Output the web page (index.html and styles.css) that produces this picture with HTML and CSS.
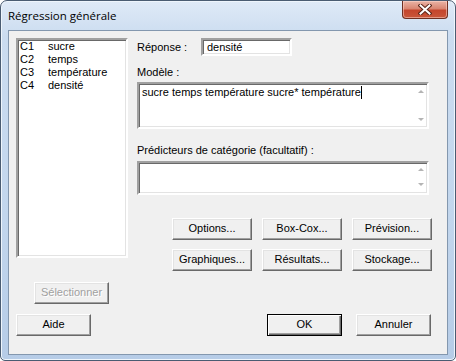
FILE: index.html
```html
<!DOCTYPE html>
<html lang="fr">
<head>
  <meta charset="UTF-8">
  <title>Régression générale</title>
  <link rel="stylesheet" href="styles.css">
</head>
<body>
  <div class="window">
    <div class="titlebar">
      <span class="title">Régression générale</span>
      <div class="close-btn">
        <svg width="14" height="11" viewBox="0 0 14 11">
          <path d="M2.5 1.5 L11.5 9.5 M11.5 1.5 L2.5 9.5" stroke="#5a2418" stroke-width="4" stroke-linecap="square" fill="none"/>
          <path d="M2.5 1.5 L11.5 9.5 M11.5 1.5 L2.5 9.5" stroke="#ffffff" stroke-width="2" stroke-linecap="square" fill="none"/>
        </svg>
      </div>
    </div>

    <div class="client">
      <div class="top">
        <div class="varlist sunken">
          <div class="var"><span class="col">C1</span><span>sucre</span></div>
          <div class="var"><span class="col">C2</span><span>temps</span></div>
          <div class="var"><span class="col">C3</span><span>température</span></div>
          <div class="var"><span class="col">C4</span><span>densité</span></div>
        </div>

        <div class="right">
          <div class="resp-row">
            <span class="resp-label">Réponse :</span>
            <div class="field sunken">densité</div>
          </div>

          <div class="label modele-label">Modèle :</div>
          <div class="memo memo-model sunken">
            <div class="memo-text">sucre temps température sucre* température<span class="caret"></span></div>
            <div class="scroll">
              <span class="arrow-up"></span>
              <span class="arrow-down"></span>
            </div>
          </div>

          <div class="label pred-label">Prédicteurs de catégorie (facultatif) :</div>
          <div class="memo memo-pred sunken">
            <div class="memo-text"></div>
            <div class="scroll">
              <span class="arrow-up"></span>
              <span class="arrow-down"></span>
            </div>
          </div>

          <div class="btn-grid">
            <div class="btn wide">Options...</div>
            <div class="btn wide">Box-Cox...</div>
            <div class="btn wide">Prévision...</div>
            <div class="btn wide">Graphiques...</div>
            <div class="btn wide">Résultats...</div>
            <div class="btn wide">Stockage...</div>
          </div>
        </div>
      </div>

      <div class="select-row">
        <div class="btn disabled">Sélectionner</div>
      </div>

      <div class="bottom-row">
        <div class="btn">Aide</div>
        <div class="btn default ok">OK</div>
        <div class="btn cancel">Annuler</div>
      </div>
    </div>
  </div>
</body>
</html>
```

FILE: styles.css
```css
body {
  margin: 0;
  background: #ffffff;
  font-family: "Liberation Sans", Arial, sans-serif;
  font-size: 11px;
  color: #000;
}

.window {
  width: 456px;
  height: 361px;
  box-sizing: border-box;
  border: 1px solid #4a5c72;
  border-radius: 7px 7px 5px 5px;
  background: linear-gradient(180deg, #dfeaf7 0%, #cbdcf0 10%, #c2d6ed 60%, #b6cce7 100%);
  padding: 0 7px 5px 7px;
  box-shadow: inset 0 0 0 1px #eef5fc;
}

.titlebar {
  height: 29px;
  display: flex;
  justify-content: space-between;
  align-items: flex-start;
}

.title {
  font-family: "Open Sans", "Liberation Sans", sans-serif;
  font-size: 11.5px;
  line-height: 29px;
  color: #000;
}

.close-btn {
  width: 46px;
  height: 18px;
  box-sizing: border-box;
  border: 1px solid #6e2f22;
  border-top: none;
  border-radius: 0 0 4px 4px;
  background: linear-gradient(180deg, #eab4a6 0%, #d98672 45%, #c4452c 55%, #c9563a 100%);
  display: flex;
  align-items: center;
  justify-content: center;
  box-shadow: inset 0 0 0 1px rgba(255, 220, 210, 0.5);
}

.client {
  height: 325px;
  box-sizing: border-box;
  border: 1px solid #8397ae;
  background: #f0f0f0;
  padding: 7px 16px 0 7px;
}

.sunken {
  box-sizing: border-box;
  background: #fff;
  border: 2px solid;
  border-color: #a0a0a0 #fff #fff #a0a0a0;
  box-shadow: inset 1px 1px 0 #696969, inset -1px -1px 0 #e3e3e3;
}

.top {
  display: flex;
  align-items: flex-start;
}

.varlist {
  width: 112px;
  height: 220px;
  padding: 0 2px;
}

.var {
  display: flex;
  line-height: 13px;
}

.var .col {
  width: 28px;
}

.right {
  margin-left: 9px;
  width: 292px;
}

.resp-row {
  display: flex;
  height: 18px;
  align-items: center;
}

.resp-label {
  width: 64px;
}

.field {
  width: 91px;
  height: 18px;
  padding: 0 4px;
  line-height: 14px;
}

.label {
  line-height: 13px;
}

.modele-label {
  margin-top: 10px;
  margin-bottom: 3px;
}

.pred-label {
  margin-top: 15px;
  margin-bottom: 4px;
}

.memo {
  display: flex;
  width: 292px;
}

.memo-model {
  height: 47px;
}

.memo-pred {
  height: 34px;
}

.memo-text {
  flex: 1;
  padding: 2px 3px;
  line-height: 13px;
  white-space: nowrap;
}

.caret {
  display: inline-block;
  width: 1px;
  height: 13px;
  background: #000;
  vertical-align: top;
}

.scroll {
  width: 12px;
  display: flex;
  flex-direction: column;
  justify-content: space-between;
  align-items: center;
}

.memo-model .scroll {
  padding: 6px 0 6px;
}

.memo-pred .scroll {
  padding: 5px 0 7px;
}

.arrow-up {
  width: 0;
  height: 0;
  border-left: 3px solid transparent;
  border-right: 3px solid transparent;
  border-bottom: 3px solid #b4b4b4;
}

.arrow-down {
  width: 0;
  height: 0;
  border-left: 3px solid transparent;
  border-right: 3px solid transparent;
  border-top: 3px solid #b4b4b4;
}

.btn-grid {
  margin-top: 23px;
  margin-left: 35px;
  display: grid;
  grid-template-columns: 80px 80px 80px;
  column-gap: 10px;
  row-gap: 9px;
}

.btn {
  width: 75px;
  height: 22px;
  box-sizing: border-box;
  background: #f0f0f0;
  border: 1px solid;
  border-color: #fff #696969 #696969 #fff;
  box-shadow: inset -1px -1px 0 #a0a0a0, inset 1px 1px 0 #e3e3e3;
  text-align: center;
  line-height: 19px;
}

.btn.wide {
  width: 80px;
}

.btn.disabled {
  color: #a0a0a0;
  text-shadow: 1px 1px 0 #fff;
}

.btn.default {
  border: 1px solid #000;
  box-shadow: inset 1px 1px 0 #fff, inset -1px -1px 0 #696969, inset -2px -2px 0 #a0a0a0;
}

.select-row {
  margin-top: 11px;
  padding-left: 18px;
}

.bottom-row {
  margin-top: 10px;
  display: flex;
}

.ok {
  margin-left: auto;
}

.cancel {
  margin-left: 14px;
}
```
